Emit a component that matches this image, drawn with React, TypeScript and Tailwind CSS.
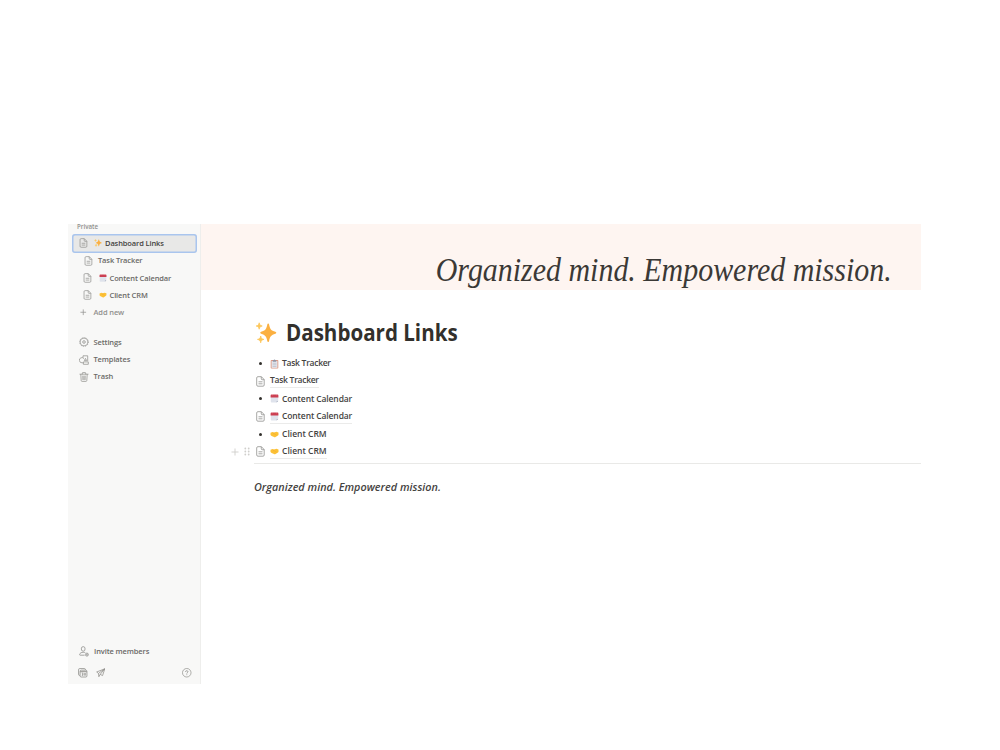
import type { ReactNode } from 'react'

type IconProps = { className?: string }

const PageIcon = ({ className = '' }: IconProps) => (
  <svg viewBox="0 0 9 11" fill="none" stroke="currentColor" strokeWidth="0.8" strokeLinejoin="round" className={className}>
    <path d="M1.9.7h3.5l2.8 2.9v5.4a1.2 1.2 0 0 1-1.2 1.2H1.9A1.2 1.2 0 0 1 .7 9V1.9A1.2 1.2 0 0 1 1.9.7Z" />
    <path d="M5.3.8v2a.9.9 0 0 0 .9.9h1.9M2.5 5.8h4M2.5 7.8h4" />
  </svg>
)

const SparklesIcon = ({ className = '' }: IconProps) => (
  <svg viewBox="0 0 22 22" className={className}>
    <path fill="#fbb041" d="M13.2 1.5c.5 0 .8.4.9.9.8 4.5 2 6.1 6.3 7.3.6.2.9.5.9 1s-.3.8-.9 1c-4.3 1.2-5.5 2.8-6.3 7.3-.1.6-.4.9-.9.9s-.8-.3-.9-.9c-.8-4.5-2-6.1-6.2-7.3-.6-.2-.9-.5-.9-1s.3-.8.9-1c4.2-1.2 5.4-2.8 6.2-7.3.1-.5.4-.9.9-.9Z" />
    <path fill="#fcc75b" stroke="#fcc75b" strokeWidth=".8" strokeLinejoin="round" d="M4.2.8c.4 2.1.9 2.7 3 3.2-2.1.5-2.6 1.1-3 3.2C3.8 5.1 3.3 4.5 1.2 4c2.1-.5 2.6-1.1 3-3.2ZM5.7 14c.4 2.2 1 2.9 3.2 3.4-2.2.5-2.8 1.2-3.2 3.4-.4-2.2-1-2.9-3.2-3.4 2.2-.5 2.8-1.2 3.2-3.4Z" />
  </svg>
)

const CalendarIcon = ({ className = '' }: IconProps) => (
  <svg viewBox="0 0 9 9" className={className}>
    <path fill="#dfe3ec" d="M.8 2.5h7.4v4.6L6.7 8.6H1.6a.8.8 0 0 1-.8-.8Z" />
    <path fill="#a9b0c0" d="M8.2 7.1 6.7 8.6V7.1Z" />
    <path fill="#cc3f51" d="M1.5.6h6a.9.9 0 0 1 .9.9v1.9H.6V1.5a.9.9 0 0 1 .9-.9Z" />
    <path stroke="#f3b5bb" strokeWidth=".5" d="M2.4.3v1M6.6.3v1" />
  </svg>
)

const HandshakeIcon = ({ className = '' }: IconProps) => (
  <svg viewBox="0 0 9 7" className={className}>
    <path fill="#fcc136" d="M.5 1.7 2.5 1l1.8.4 2-.6 2.2.8v2.3L7.6 4.7 5.5 6.1a1.4 1.4 0 0 1-1.5 0L1.6 4.9.5 4Z" />
    <path stroke="#e9a02b" strokeWidth=".35" fill="none" d="M4.4 1.5 3.3 2.7l1.3.2 2 1.4" />
  </svg>
)

const ClipboardIcon = ({ className = '' }: IconProps) => (
  <svg viewBox="0 0 9 10" className={className}>
    <rect x=".7" y="1" width="7.6" height="8.5" rx=".8" fill="#dc9a86" />
    <path fill="#e9ecf2" d="M1.6 2h5.8v6.8H1.6Z" />
    <path fill="#8f95a5" d="M2.7 1.2h1a.8.8 0 0 1 1.6 0h1v1.5H2.700Z" />
    <path stroke="#a6aab8" strokeWidth=".6" d="M2.5 4.2h4M2.5 5.8h4M2.5 7.4h4" />
  </svg>
)

const GearIcon = ({ className = '' }: IconProps) => (
  <svg viewBox="0 0 10 10" fill="none" stroke="currentColor" className={className}>
    <circle cx="5" cy="5" r="3.9" strokeWidth=".7" />
    <circle cx="5" cy="5" r="4.4" strokeWidth=".7" strokeDasharray="1.15 1.15" />
    <circle cx="5" cy="5" r="1.3" strokeWidth=".8" />
  </svg>
)

const TemplatesIcon = ({ className = '' }: IconProps) => (
  <svg viewBox="0 0 10 10" fill="none" stroke="currentColor" strokeWidth=".75" strokeLinejoin="round" className={className}>
    <path d="M4 2.7V.8h4.700v5.300" />
    <path d="M4.200 7.800H3A2.600 2.600 0 1 1 5.200 3.900" />
    <path d="M6.500 3.400 7.600 5.600H5.400ZM4.400 6.900h4.900v2.400H4.400Z" />
  </svg>
)

const TrashIcon = ({ className = '' }: IconProps) => (
  <svg viewBox="0 0 10 10" fill="none" stroke="currentColor" strokeWidth=".75" strokeLinecap="round" className={className}>
    <path d="M.9 2.2h8.2M3.3 2.1V1.1a.5.5 0 0 1 .5-.5h2.4a.5.5 0 0 1 .5.5v1M1.8 2.4l.4 6.2a.9.9 0 0 0 .9.8h3.8a.9.9 0 0 0 .9-.8l.4-6.2M3.8 4l.1 3.7M5 4v3.7M6.2 4l-.1 3.7" />
  </svg>
)

const InviteIcon = ({ className = '' }: IconProps) => (
  <svg viewBox="0 0 10 11" fill="none" stroke="currentColor" strokeWidth=".8" className={className}>
    <ellipse cx="4.2" cy="2.9" rx="1.9" ry="2.3" />
    <path d="M5.6 9.2H1.2a.6.6 0 0 1-.6-.7c.3-1.5 1.8-2.2 3.6-2.2.8 0 1.5.1 2.1.4" />
    <circle cx="7.9" cy="8.6" r="1.5" />
    <path strokeWidth=".6" d="M7.9 7.8v1.6M7.1 8.6h1.6" />
  </svg>
)

const CalendarAppIcon = ({ className = '' }: IconProps) => (
  <svg viewBox="0 0 10 10" fill="none" stroke="currentColor" strokeWidth=".8" className={className}>
    <path d="M2 7.8h-.3A1.1 1.1 0 0 1 .6 6.7V1.8A1.2 1.2 0 0 1 1.8.6h4.9a1.1 1.1 0 0 1 1.1 1.1v.4" />
    <rect x="2.2" y="2.3" width="7.2" height="7.2" rx="1.2" />
    <path strokeWidth="1" d="M2.3 3.9h7" />
    <path strokeWidth=".7" d="M4 5.4h1.2v2.4H4M4.2 6.6h1M6.7 5.3v2.7M7.8 5.3v2.7" />
  </svg>
)

const SendIcon = ({ className = '' }: IconProps) => (
  <svg viewBox="0 0 10 10" fill="none" stroke="currentColor" strokeWidth=".75" strokeLinejoin="round" className={className}>
    <path d="M.7 4.2 9.3.8 6.9 8 4.4 6.7 3 9.2 2.6 5.7ZM2.6 5.7 9.3.8 4.4 6.7" />
  </svg>
)

const HelpIcon = ({ className = '' }: IconProps) => (
  <svg viewBox="0 0 10 10" fill="none" stroke="currentColor" strokeWidth=".7" className={className}>
    <circle cx="5" cy="5" r="4.5" />
    <path strokeWidth=".8" d="M3.7 4.1c0-.8.6-1.3 1.3-1.3s1.3.5 1.3 1.2c0 .9-1.3.9-1.3 1.9M5 6.7v.8" />
  </svg>
)

const PlusIcon = ({ className = '' }: IconProps) => (
  <svg viewBox="0 0 8 8" fill="none" stroke="currentColor" strokeWidth=".9" className={className}>
    <path d="M4 .5v7M.5 4h7" />
  </svg>
)

const GripIcon = ({ className = '' }: IconProps) => (
  <svg viewBox="0 0 6 9" fill="currentColor" className={className}>
    {[1.5, 4.5, 7.5].map((y) => (
      <g key={y}>
        <circle cx="1.3" cy={y} r=".9" />
        <circle cx="4.7" cy={y} r=".9" />
      </g>
    ))}
  </svg>
)

interface NavItemProps {
  icon: ReactNode
  emoji?: ReactNode
  children: ReactNode
  className?: string
}

const NavItem = ({ icon, emoji, children, className = '' }: NavItemProps) => (
  <div className={`flex h-[17.2px] items-center whitespace-nowrap ${className}`}>
    <span className="mr-[5px] flex w-[10px] justify-center text-[#91918e]">{icon}</span>
    {emoji && <span className="mr-[3px] ml-px flex w-[8px] justify-center">{emoji}</span>}
    <span>{children}</span>
  </div>
)

const Sidebar = () => (
  <aside className="flex w-[133px] shrink-0 flex-col border-r border-[#eeeeec] bg-[#f8f8f7] text-[7.5px] font-semibold tracking-[-0.12px] text-[#6b6a67]">
    <div className="mb-[3px] h-[7.5px] pl-[9px] text-[6.2px] leading-[6px] tracking-normal text-[#91918e]">Private</div>
    <NavItem
      icon={<PageIcon className="h-[10px] w-[9px]" />}
      emoji={<SparklesIcon className="size-[8px]" />}
      className="mr-[3px] ml-[4px] !h-[18.5px] rounded-[3px] bg-[#e8e8e7] pl-[6px] text-[#45433f] ring-[1.5px] ring-[#a9c5ee] ring-inset"
    >
      Dashboard Links
    </NavItem>
    <NavItem icon={<PageIcon className="h-[10px] w-[9px]" />} className="pl-[15px]">
      Task Tracker
    </NavItem>
    <NavItem
      icon={<PageIcon className="h-[10px] w-[9px]" />}
      emoji={<CalendarIcon className="size-[8px]" />}
      className="pl-[14.5px]"
    >
      Content Calendar
    </NavItem>
    <NavItem
      icon={<PageIcon className="h-[10px] w-[9px]" />}
      emoji={<HandshakeIcon className="h-[6px] w-[8px]" />}
      className="pl-[14.5px]"
    >
      Client CRM
    </NavItem>
    <NavItem icon={<PlusIcon className="size-[6.5px]" />} className="pl-[10.5px] text-[#91918e]">
      Add new
    </NavItem>
    <div className="mt-[12.5px]">
      <NavItem icon={<GearIcon className="size-[10px]" />} className="pl-[10.5px]">
        Settings
      </NavItem>
      <NavItem icon={<TemplatesIcon className="size-[10px]" />} className="pl-[10.5px]">
        Templates
      </NavItem>
      <NavItem icon={<TrashIcon className="size-[10px]" />} className="pl-[10.5px]">
        Trash
      </NavItem>
    </div>
    <div className="mt-auto">
      <NavItem icon={<InviteIcon className="h-[11px] w-[10px]" />} className="pl-[11px]">
        Invite members
      </NavItem>
      <div className="mt-[7.5px] mb-[6px] flex h-[10px] items-center pr-[8.5px] pl-[10px] text-[#8a8985]">
        <CalendarAppIcon className="mr-[8px] size-[9.5px]" />
        <SendIcon className="size-[9.5px]" />
        <HelpIcon className="ml-auto size-[9.5px]" />
      </div>
    </div>
  </aside>
)

interface BlockProps {
  emoji?: ReactNode
  children: ReactNode
}

const BulletItem = ({ emoji, children }: BlockProps) => (
  <li className="flex h-[18px] items-center">
    <span className="mr-[8px] ml-[5px] size-[3px] rounded-full bg-[#32302c]" />
    <span className="mr-[3px] flex w-[9px] justify-center">{emoji}</span>
    {children}
  </li>
)

const PageLink = ({ emoji, children }: BlockProps) => (
  <li className="flex h-[17.4px] items-center">
    <PageIcon className="mr-[5px] ml-[2px] h-[11px] w-[9px] text-[#91918e]" />
    <span className="flex h-[14px] items-center border-b border-[#ebebea]">
      {emoji && <span className="mr-[3px] flex w-[9px] justify-center">{emoji}</span>}
      {children}
    </span>
  </li>
)

const calendar = <CalendarIcon className="size-[9px]" />
const handshake = <HandshakeIcon className="h-[7px] w-[9px]" />

export default function App() {
  return (
    <div className="h-[750px] w-[1000px] overflow-hidden bg-white pt-[223.5px] pl-[68px] font-['Open_Sans','Noto_Sans',sans-serif]">
      <div className="flex h-[460.5px] w-[853px]">
        <Sidebar />
        <main className="min-w-0 flex-1 text-[8.5px] font-semibold tracking-[-0.12px] text-[#45433f]">
          <div className="flex h-[66px] items-end justify-end bg-[#fef5f1] pr-[29px] pb-[1px] font-['Liberation_Serif',serif] text-[33px] leading-[38px] font-normal tracking-normal whitespace-nowrap text-[#3b3936] italic">
            <span className="origin-right scale-x-[.907]">Organized mind. Empowered mission.</span>
          </div>
          <div className="pl-[53px]">
            <h1 className="mt-[27px] flex h-[32px] items-center text-[22.5px] font-bold tracking-normal whitespace-nowrap text-[#32302c]">
              <SparklesIcon className="mr-[9px] ml-px size-[22px]" />
              <span className="origin-left scale-x-[.914]">Dashboard Links</span>
            </h1>
            <ul className="mt-[6px]">
              <BulletItem emoji={<ClipboardIcon className="h-[10px] w-[9px]" />}>
                <span className="tracking-[-0.27px]">Task Tracker</span>
              </BulletItem>
              <PageLink>
                <span className="tracking-[-0.27px]">Task Tracker</span>
              </PageLink>
              <BulletItem emoji={calendar}>Content Calendar</BulletItem>
              <PageLink emoji={calendar}>Content Calendar</PageLink>
              <BulletItem emoji={handshake}>
                <span className="tracking-normal">Client CRM</span>
              </BulletItem>
              <li className="-ml-[23px] flex items-center text-[#cfcecb]">
                <PlusIcon className="mr-[5px] size-[8px]" />
                <GripIcon className="mr-[4px] h-[9px] w-[6px]" />
                <ul className="tracking-normal text-[#45433f]">
                  <PageLink emoji={handshake}>Client CRM</PageLink>
                </ul>
              </li>
            </ul>
            <hr className="mt-[2.5px] border-[#e9e9e7]" />
            <p className="mt-[15px] text-[10.8px] leading-[15px] tracking-[0.03px] italic">Organized mind. Empowered mission.</p>
          </div>
        </main>
      </div>
    </div>
  )
}
